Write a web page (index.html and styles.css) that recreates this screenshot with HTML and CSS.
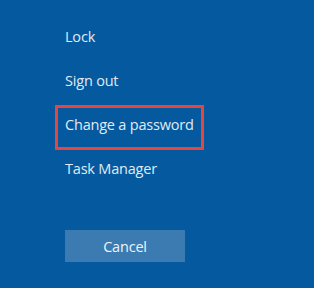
FILE: index.html
```html
<!DOCTYPE html>
<html>
<head>
<meta charset="utf-8">
<link rel="stylesheet" href="styles.css">
</head>
<body>
<div class="screen">
  <ul class="menu">
    <li class="item">Lock</li>
    <li class="item">Sign out</li>
    <li class="item item-highlight">Change a password</li>
    <li class="item">Task Manager</li>
  </ul>
  <button class="cancel">Cancel</button>
</div>
</body>
</html>
```

FILE: styles.css
```css
html, body {
  margin: 0;
  padding: 0;
  background: #04599f;
}
.screen {
  width: 314px;
  height: 288px;
  box-sizing: border-box;
  padding: 15px 0 0 65px;
  font-family: "Open Sans", "Noto Sans", sans-serif;
  font-size: 14.5px;
  letter-spacing: -0.2px;
  color: #e0ebf5;
  display: flex;
  flex-direction: column;
}
.menu {
  list-style: none;
  margin: 0;
  padding: 0;
}
.item {
  line-height: 44px;
  height: 44px;
  white-space: nowrap;
}
.item-highlight {
  box-sizing: border-box;
  width: 149px;
  height: 45px;
  margin: 2px 0 -3px -10px;
  padding: 0 7px 0 7px;
  border: 3px solid #e8453c;
  line-height: 34.4px;
}
.cancel {
  margin-top: 39px;
  width: 120px;
  height: 32px;
  border: none;
  padding: 0;
  background: #3b7bb2;
  color: #eef4fa;
  font-family: "Open Sans", "Noto Sans", sans-serif;
  font-size: 14.5px;
  letter-spacing: -0.2px;
}
```
